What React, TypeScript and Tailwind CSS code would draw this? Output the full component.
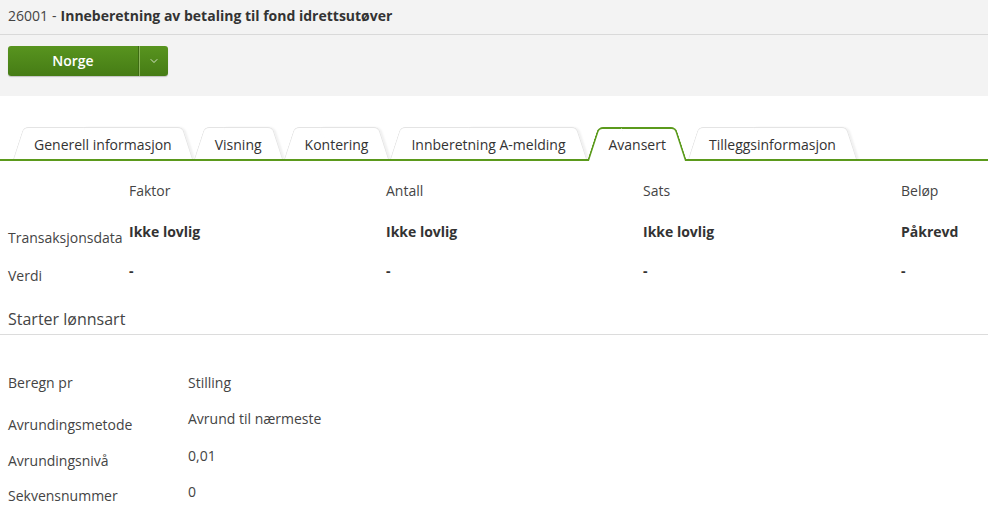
import { ChevronDown } from 'lucide-react'

const tabs = [
  { label: 'Generell informasjon' },
  { label: 'Visning' },
  { label: 'Kontering' },
  { label: 'Innberetning A-melding' },
  { label: 'Avansert', active: true },
  { label: 'Tilleggsinformasjon' },
]

const columns = [
  { head: 'Faktor', trans: 'Ikke lovlig' },
  { head: 'Antall', trans: 'Ikke lovlig' },
  { head: 'Sats', trans: 'Ikke lovlig' },
  { head: 'Beløp', trans: 'Påkrevd' },
]

const fields = [
  { label: 'Beregn pr', value: 'Stilling', offset: 'pt-0', h: 'h-[36px]' },
  { label: 'Avrundingsmetode', value: 'Avrund til nærmeste', offset: 'pt-[6px]', h: 'h-[37px]' },
  { label: 'Avrundingsnivå', value: '0,01', offset: 'pt-[5px]', h: 'h-[36px]' },
  { label: 'Sekvensnummer', value: '0', offset: 'pt-[4px]', h: 'h-[36px]' },
]

function Tab({ label, active }: { label: string; active?: boolean }) {
  const half = active
    ? 'border-[#5b9a1c] border-2 bg-white bottom-[-2px]'
    : 'border-[#e4e4e4] border bg-white bottom-0'
  return (
    <div className={`relative h-[32px] px-[21px] flex items-center ${active ? 'z-20' : 'z-0'}`}>
      <span
        className={`absolute left-0 top-0 w-[55%] border-r-0 border-b-0 rounded-tl-[5px] origin-bottom skew-x-[-18deg] ${half}`}
      />
      <span
        className={`absolute right-0 top-0 w-[55%] border-l-0 border-b-0 rounded-tr-[5px] origin-bottom skew-x-[18deg] ${half} ${active ? '' : 'shadow-[2px_0_2px_rgba(0,0,0,0.06)]'}`}
      />
      <span className="relative text-[14px] text-[#333] whitespace-nowrap leading-[20px] pt-[4px]">{label}</span>
    </div>
  )
}

export default function App() {
  return (
    <div className="w-[988px] h-[525px] overflow-hidden bg-white text-[#333] font-['Open_Sans',sans-serif]">
      <div className="bg-[#f3f3f3]">
        <div className="h-[35px] border-b border-[#d9d9d9] px-[8px] flex items-center pb-[4px] text-[14px]">
          <span className="text-[#444]">26001</span>
          <span className="mx-[4px] text-[#444]">-</span>
          <span className="font-bold text-[#333]">Inneberetning av betaling til fond idrettsutøver</span>
        </div>
        <div className="pt-[11px] pb-[20px] px-[8px]">
          <div className="flex w-[160px] h-[30px] rounded-[3px] overflow-hidden bg-gradient-to-b from-[#58941f] to-[#467c15] shadow-[0_1px_1px_rgba(0,0,0,0.2)]">
            <button className="w-[130px] text-white text-[14px] font-semibold flex items-center justify-center pb-[1px]">
              Norge
            </button>
            <div className="w-[1px] bg-[#3d6b12]" />
            <div className="w-[1px] bg-[#8bb55c]" />
            <div className="flex-1 flex items-center justify-center text-white">
              <ChevronDown size={12} strokeWidth={1.5} />
            </div>
          </div>
        </div>
      </div>

      <div className="mt-[31px] flex items-end gap-[1px] pl-[13px] border-b-2 border-[#5b9a1c] h-[34px]">
        {tabs.map((t) => (
          <Tab key={t.label} label={t.label} active={t.active} />
        ))}
      </div>

      <div className="mt-[20px] px-[8px] text-[14px] leading-[20px]">
        <div className="grid grid-cols-[121px_257px_257px_258px_1fr] h-[41px] text-[#444]">
          <div />
          {columns.map((c) => (
            <div key={c.head}>{c.head}</div>
          ))}
        </div>
        <div className="grid grid-cols-[121px_257px_257px_258px_1fr] h-[39px]">
          <div className="pt-[6px] text-[#444] whitespace-nowrap">Transaksjonsdata</div>
          {columns.map((c) => (
            <div key={c.head} className="font-bold">{c.trans}</div>
          ))}
        </div>
        <div className="grid grid-cols-[121px_257px_257px_258px_1fr] h-[36px]">
          <div className="pt-[5px] text-[#444]">Verdi</div>
          {columns.map((c) => (
            <div key={c.head} className="font-bold">-</div>
          ))}
        </div>
      </div>

      <div className="pl-[8px] mt-[10px] border-b border-[#dcdcdc] pb-[3px] text-[16px] leading-[24px] text-[#444]">
        Starter lønnsart
      </div>

      <div className="mt-[38px] px-[8px] text-[14px] leading-[20px] text-[#444]">
        {fields.map((f) => (
          <div key={f.label} className={`flex ${f.h}`}>
            <div className={`w-[180px] ${f.offset}`}>{f.label}</div>
            <div>{f.value}</div>
          </div>
        ))}
      </div>
    </div>
  )
}
